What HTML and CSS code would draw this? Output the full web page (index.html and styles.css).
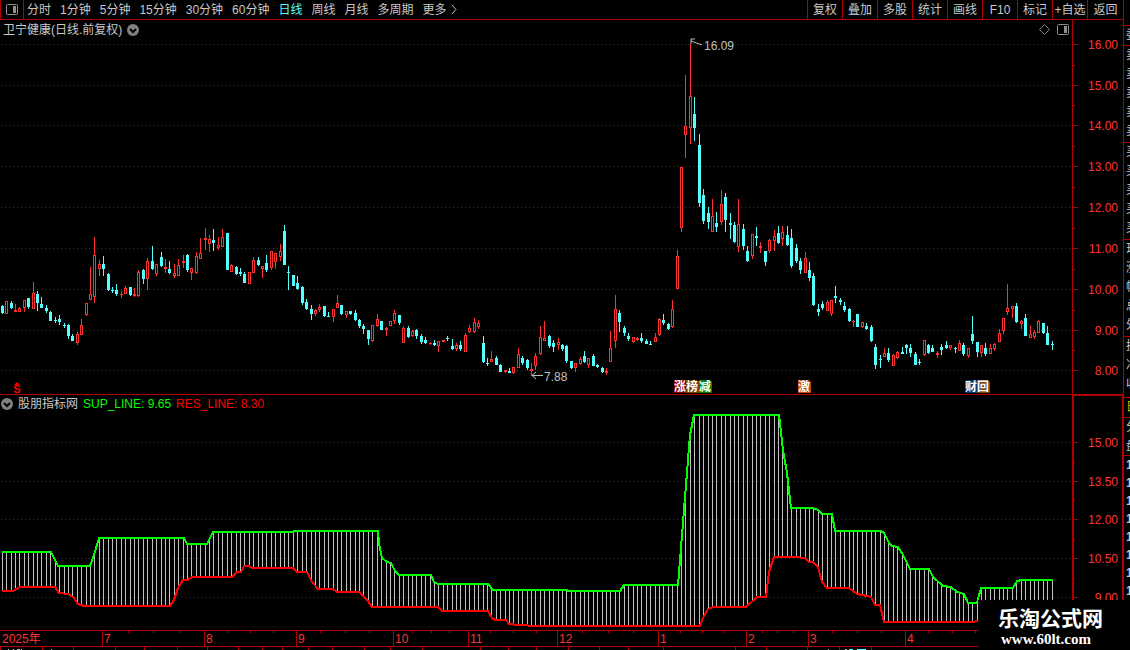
FILE: index.html
```
<!DOCTYPE html>
<html lang="zh-CN">
  <head>
    <meta charset="utf-8">
    <meta name="viewport" content="width=device-width, initial-scale=1.0">
    <title>卫宁健康 日线</title>
    <link rel="stylesheet" href="styles.css">
  </head>

  <body>
    <div class="terminal">
      <div class="workspace">
        <header class="toolbar">
          <button class="layout-btn" aria-label="布局">
            <svg width="12" height="11"><rect x=".5" y=".5" width="11" height="10" rx="1" fill="none" stroke="#909090"/><rect x="7" y="2" width="3" height="7" fill="#909090"/></svg>
          </button>
          <nav class="periods">
            <button>分时</button>
            <button>1分钟</button>
            <button>5分钟</button>
            <button>15分钟</button>
            <button>30分钟</button>
            <button>60分钟</button>
            <button class="active">日线</button>
            <button>周线</button>
            <button>月线</button>
            <button>多周期</button>
            <button class="more">更多<svg width="6" height="9"><path d="M1 0l4 4.500l-4 4.500" fill="none" stroke="#c0c0c0"/></svg></button>
          </nav>
          <nav class="tools">
            <button>复权</button>
            <button>叠加</button>
            <button>多股</button>
            <button>统计</button>
            <button>画线</button>
            <button>F10</button>
            <button>标记</button>
            <button>+自选</button>
            <button>返回</button>
          </nav>
        </header>

        <!-- daily candles -->
        <section class="panel price-panel">
          <div class="plot">
            <svg id="price" class="canvas"></svg>
            <div class="panel-title">
              <span>卫宁健康(日线.前复权)</span>
              <button class="round-btn" aria-label="展开">
                <svg width="12" height="12"><circle cx="6" cy="6" r="6" fill="#808080"/><path d="M3 5l3 3l3-3" fill="none" stroke="#000" stroke-width="2"/></svg>
              </button>
            </div>
            <div class="panel-tools">
              <svg width="11" height="11"><path d="M5.500 .5l5 5l-5 5l-5-5z" fill="none" stroke="#808080"/></svg>
              <svg width="12" height="11"><rect x=".5" y=".5" width="11" height="10" rx="1" fill="none" stroke="#909090"/><rect x="7" y="2" width="3" height="7" fill="#909090"/></svg>
            </div>
          </div>
          <svg id="price-axis" class="axis"></svg>
        </section>

        <!-- support / resistance band -->
        <section class="panel band-panel">
          <div class="plot">
            <svg id="band" class="canvas"></svg>
            <div class="panel-title band-title">
              <button class="round-btn" aria-label="展开">
                <svg width="12" height="12"><circle cx="6" cy="6" r="6" fill="#808080"/><path d="M3 5l3 3l3-3" fill="none" stroke="#000" stroke-width="2"/></svg>
              </button>
              <span>股朋指标网</span>
              <span class="sup">SUP_LINE: 9.65</span>
              <span class="res">RES_LINE: 8.30</span>
            </div>
          </div>
          <svg id="band-axis" class="axis"></svg>
        </section>

        <svg id="dates" class="dates"></svg>
        <svg id="lower" class="lower"></svg>
      </div>

      <aside class="quotes">
        <div class="block gap"></div>
        <div class="block single">委</div>
        <div class="block five">卖<br>卖<br>卖<br>卖<br>卖</div>
        <div class="block five">买<br>买<br>买<br>买<br>买</div>
        <div class="block five">现<br>涨<br>幅<br>总<br>外</div>
        <div class="block three">换<br>净<br>收</div>
        <div class="block single mark">日</div>
        <div class="block two">分<br>盘</div>
        <div class="block ticks">1<br>1<br>1<br>1<br>1<br>1<br>1<br>1</div>
      </aside>
    </div>

    <div class="watermark">
      <strong>乐淘公式网</strong>
      <a href="#">www.60lt.com</a>
    </div>

    <script src="chart.js"></script>
  </body>
</html>
```
FILE: styles.css
```
* {
  box-sizing: border-box;
}

body {
  margin: 0;
  background: #000;
  color: #c8c8c8;
  font-family: "Liberation Sans", "Noto Sans CJK SC", sans-serif;
  font-size: 12px;
  line-height: 18px;
}

button {
  padding: 0;
  border: none;
  background: none;
  color: inherit;
  font: inherit;
  white-space: nowrap;
  cursor: pointer;
}

svg {
  display: block;
}

.terminal {
  display: flex;
  height: 100vh;
  overflow: hidden;
}

.workspace {
  flex: 1;
  min-width: 0;
  display: flex;
  flex-direction: column;
}

/* top bar */
.toolbar {
  display: flex;
  height: 20px;
  border-bottom: 1px solid #b00000;
}

.layout-btn {
  display: flex;
  align-items: center;
  justify-content: center;
  width: 24px;
  border-left: 1px solid #b00000;
  border-right: 1px solid #b00000;
}

.periods {
  display: flex;
  gap: 9px;
  padding-left: 3px;
}

.periods .active {
  color: #54ffff;
}

.more {
  display: flex;
  align-items: center;
  gap: 4px;
}

.tools {
  display: flex;
  margin-left: auto;
}

.tools button {
  width: 35px;
  border-left: 1px solid #b00000;
}

.tools button:last-child {
  width: 36px;
}

/* chart panels */
.panel {
  display: flex;
}

.price-panel {
  flex: 1;
  min-height: 0;
}

.band-panel {
  height: 236px;
  border-top: 1px solid #b00000;
}

.plot {
  position: relative;
  flex: 1;
  min-width: 0;
}

.canvas {
  width: 100%;
  height: 100%;
}

.axis {
  width: 51px;
  height: 100%;
}

.panel-title {
  position: absolute;
  top: 1px;
  left: 3px;
  display: flex;
  align-items: center;
  gap: 5px;
}

.band-title {
  top: 0;
  left: 1px;
}

.round-btn {
  display: block;
}

.sup {
  color: #00ff00;
}

.res {
  color: #ff0000;
}

.panel-tools {
  position: absolute;
  top: 4px;
  right: 3px;
  display: flex;
  gap: 7px;
}

.dates {
  width: 100%;
  height: 17px;
}

.lower {
  width: 100%;
  height: 3px;
}

svg text {
  font-family: "Liberation Sans", "Noto Sans CJK SC", sans-serif;
  font-size: 12px;
}

svg .badge {
  font-weight: bold;
}

svg .dollar {
  font-size: 11px;
  font-weight: bold;
}

/* clipped quote column on the right */
.quotes {
  width: 7px;
  overflow: hidden;
  border-left: 1px solid #b00000;
  line-height: 19px;
}

.block {
  padding-left: 2px;
  overflow: hidden;
  white-space: nowrap;
  border-bottom: 1px solid #b00000;
}

.gap {
  height: 26px;
}

.single {
  height: 20px;
}

.five {
  height: 97px;
}

.three {
  height: 61px;
}

.two {
  height: 38px;
}

.mark {
  color: #c0c000;
}

.ticks {
  line-height: 18px;
  font-weight: bold;
  border-bottom: none;
}

/* site mark over the lower right corner */
.watermark {
  position: absolute;
  right: 0;
  bottom: 0;
  width: 152px;
  height: 50px;
  padding: 8px 0 0 20px;
  background: #000;
  color: #fff;
}

.watermark strong {
  display: block;
  font-size: 21px;
  line-height: 22px;
}

.watermark a {
  display: block;
  padding-left: 3px;
  color: #fff;
  font-family: "Liberation Serif", serif;
  font-size: 15px;
  font-weight: bold;
  line-height: 18px;
  text-decoration: none;
}
```
FILE: chart.js
```
const LINE = "#b00000";
const RED = "#ff3232";
const CYAN = "#54ffff";
const GREY = "#c0c0c0";

const PRICE_TOP = 20;
const BAND_TOP = 395;

// r = up, c = down, then high, body top, body bottom, low
const candles = `
c305,306,313,314 r301,301,314,314 c301,303,308,309 r304,310,312,312 r307,308,312,312 r300,300,308,312
c298,298,307,309 r282,293,309,309 c291,294,303,311 c297,304,308,308 c305,308,311,313 c311,312,321,321
c317,320,321,323 c315,319,322,325 c323,325,326,328 c324,325,336,339 c334,336,341,341 r332,334,343,345
r319,325,335,335 r303,303,315,316 r267,294,300,300 r237,255,297,303 r260,264,269,276 c256,264,269,276
c273,274,290,291 c287,290,291,293 c284,290,294,296 r291,294,295,298 r286,288,294,294 c287,287,295,296
r288,294,296,297 r270,272,296,297 c269,270,279,284 r258,261,279,290 c246,261,269,270 r264,264,274,276
c252,257,266,267 r259,267,269,273 c261,269,273,274 r264,273,276,278 r259,265,276,276 r255,261,263,268
c254,255,270,272 r268,268,273,280 r252,256,273,274 r238,253,259,259 r228,238,240,250 r235,239,244,252
c229,240,243,251 r237,245,248,250 r229,237,247,247 c233,233,270,270 r264,265,272,272 c266,267,274,275
c268,272,274,276 c272,274,283,283 r272,272,284,284 r257,260,273,273 c257,260,265,266 r266,266,269,278
c255,263,270,272 r251,251,268,270 r253,253,262,269 r244,251,257,261 c225,231,265,265 c266,272,273,290
c275,275,286,286 c276,283,289,290 c286,287,303,305 c299,302,309,310 c305,309,314,320 r309,310,314,316
r304,307,310,312 c306,306,316,317 c312,316,317,317 r309,309,317,322 r295,303,308,308 c305,305,314,315
r311,311,315,318 c311,311,314,315 c310,313,320,321 c319,320,326,328 c324,326,329,334 c330,330,339,345
r325,325,341,342 r314,319,326,327 c321,321,330,330 r327,328,330,336 r321,321,326,326 r310,313,321,324
c315,315,323,325 r326,328,343,343 c326,328,337,338 r330,331,336,337 c329,330,336,339 c334,336,342,344
c337,340,343,344 r342,343,344,345 c340,343,345,346 r341,341,346,352 r340,340,342,342 c336,338,339,341
c339,346,349,350 r343,345,349,351 c341,345,349,351 r333,335,352,352 r325,328,332,333 r318,322,332,333
r320,323,327,329 c336,343,362,363 c358,363,364,366 r351,359,362,362 c356,358,365,365 c364,365,372,372
r370,370,372,373 c368,371,373,373 r367,367,373,374 r348,354,368,368 c356,358,363,365 c359,360,368,370
r363,369,371,376 r353,356,366,370 r326,337,354,355 r321,338,341,341 c335,336,346,348 c340,343,347,352
r338,342,345,350 c344,345,349,351 c345,346,361,363 c361,361,368,369 r363,363,368,372 r357,359,364,365
c351,356,362,363 r358,358,365,368 c354,356,366,366 c364,365,367,368 c367,368,372,373 r368,371,373,375
r331,348,362,362 r295,309,341,348 c310,313,322,332 c326,328,333,336 c333,336,339,341 r337,337,342,343
r337,338,340,341 c333,338,341,343 c339,341,344,344 c341,344,345,345 r333,337,342,342 r318,319,335,336
c314,320,323,325 c323,324,329,330 r300,309,327,328 r250,256,289,289 r167,167,228,232 r75,126,135,158
r44,96,128,144 c97,114,128,141 c134,145,203,207 c189,195,221,224 c207,213,222,229 r199,216,232,232
c212,223,227,232 r190,204,222,225 c193,197,220,232 c213,223,225,239 c222,225,242,243 r199,224,247,252
c224,229,246,250 c246,251,261,262 r234,234,256,259 c227,236,238,246 r242,246,248,253 c251,251,262,266
r239,240,251,253 r230,236,241,251 c226,233,243,244 r226,232,239,246 c226,235,245,246 c229,238,266,268
c244,248,261,263 c258,261,270,274 r252,258,273,273 c262,270,278,281 c273,276,305,306 c304,309,312,316
c301,304,308,310 r300,302,311,311 r300,300,314,316 c286,296,298,303 c298,300,302,305 c302,306,310,312
c308,309,321,322 r320,321,322,327 c314,314,327,327 r322,322,327,328 c323,326,329,330 c325,327,341,342
c344,347,365,369 c355,359,360,368 r348,353,357,357 c348,353,360,362 r354,355,366,366 r351,352,358,359
c347,352,354,354 c344,345,348,354 c344,348,353,357 c352,354,365,365 c359,362,363,365 r340,340,355,356
c344,345,353,354 c345,348,352,352 r351,353,355,358 c344,347,350,355 c341,345,348,349 r345,345,348,350
c347,348,349,353 r340,343,351,351 c343,345,354,356 r348,348,356,358 c316,334,341,344 c342,342,352,357
r345,345,353,357 c343,348,354,356 r344,348,354,354 r343,344,349,351 r329,333,342,342 r318,318,331,334
r284,308,312,315 r306,306,309,318 c303,306,322,323 r320,321,324,329 c314,318,336,336 r326,334,338,338
r330,332,337,339 r320,321,333,333 c323,323,333,334 c326,333,345,345 c341,344,345,350`.trim().split(/\s+/);

const sup = [[2,552],[51,552],[54,558],[58,566],[90,566],[94,555],[99,538],[184,538],[187,544],[207,544],[213,532],[293,532],[294,531],[378,531],[379,543],[382,558],[387,562],[391,563],[395,571],[399,575],[431,575],[434,582],[438,584],[488,584],[493,590],[567,590],[568,591],[620,591],[624,585],[678,585],[690,435],[694,415],[779,415],[783,450],[787,473],[791,508],[813,508],[818,510],[822,514],[832,514],[835,531],[881,531],[884,533],[889,543],[892,546],[898,547],[903,555],[910,569],[929,569],[933,577],[943,586],[951,587],[957,592],[964,594],[968,603],[977,603],[981,588],[1013,588],[1017,581],[1022,580],[1053,580]];
const res = [[2,591],[13,591],[20,587],[55,587],[59,593],[68,594],[73,597],[78,604],[84,606],[170,606],[174,600],[178,588],[183,580],[188,580],[192,577],[232,577],[237,572],[241,572],[244,566],[249,566],[252,568],[293,568],[297,572],[307,572],[312,582],[318,589],[333,589],[337,592],[359,592],[368,601],[372,607],[438,607],[442,611],[488,611],[492,618],[495,620],[506,620],[509,624],[518,625],[537,626],[700,626],[703,618],[708,609],[713,607],[746,607],[757,597],[766,597],[769,572],[774,557],[795,557],[805,558],[809,562],[813,562],[818,567],[822,582],[827,588],[849,588],[857,594],[867,596],[871,597],[875,605],[880,605],[884,622],[972,622],[978,621],[1053,621]];

function rect(x, y, w, h, fill) {
  return `<rect x="${x}" y="${y}" width="${w}" height="${h}" fill="${fill}"/>`;
}

function text(x, y, str, fill, anchor = "start", cls = "label") {
  return `<text class="${cls}" x="${x}" y="${y}" fill="${fill}" text-anchor="${anchor}">${str}</text>`;
}

function candleX(i) {
  return Math.round(1.75 + 4.411 * i);
}

// dotted horizontal lines
function grid(id, rows, top) {
  let out = `<defs><pattern id="${id}" width="4" height="1" patternUnits="userSpaceOnUse">${rect(1, 0, 1, 1, LINE)}</pattern></defs>`;
  rows.forEach(y => out += rect(0, y - top, "100%", 1, `url(#${id})`));
  return out;
}

function valueAt(line, x) {
  for (let i = 1; i < line.length; i++) {
    const [x0, y0] = line[i - 1];
    const [x1, y1] = line[i];
    if (x <= x1) return Math.round(y0 + (y1 - y0) * (x - x0) / (x1 - x0));
  }
  return line[line.length - 1][1];
}

function drawPrice() {
  let out = grid("dots-price", [44, 85, 125, 166, 207, 248, 289, 330, 370], PRICE_TOP);
  candles.forEach((c, i) => {
    const x = candleX(i);
    const [high, top, bottom, low] = c.slice(1).split(",").map(v => v - PRICE_TOP);
    const color = c[0] === "r" ? RED : CYAN;
    out += rect(x, high, 1, Math.max(low - high, 1), color);
    out += rect(x - 1, top, 3, bottom - top, color);
    if (c[0] === "r" && bottom - top > 2) out += rect(x, top + 1, 1, bottom - top - 2, "#000");
  });

  // high and low marks
  out += `<path d="M702 25l-11-4M695 19h-4v5" fill="none" stroke="${GREY}"/>` + text(704, 30, "16.09", GREY);
  out += `<path d="M543 355.500h-11M536 352l-4 3.500l4 3.500" fill="none" stroke="${GREY}"/>` + text(544, 361, "7.88", GREY);

  // event badges
  [[674, "涨", "#800000"], [686, "榜", "#804000"], [699, "减", "#008000"], [798, "激", "#c04808"], [965, "财", "#003870"], [977, "回", "#804000"]].forEach(([x, s, bg]) => {
    out += `<path d="M${x} 360h11l2 2v11h-13z" fill="${bg}"/>` + text(x, 371, s, "#fff", "start", "badge");
  });

  out += `<path d="M17 362l3 3h-6z" fill="#ff0000"/>` + text(17, 373, "S", "#ff0000", "middle", "dollar");
  document.getElementById("price").innerHTML = out;
}

function drawBand() {
  let out = grid("dots-band", [442, 481, 519, 558, 597], BAND_TOP);
  candles.forEach((c, i) => {
    const x = candleX(i);
    const y = valueAt(sup, x);
    out += rect(x, y - BAND_TOP, 1, valueAt(res, x) - y, GREY);
  });
  [[sup, "#00ff00"], [res, "#ff0000"]].forEach(([line, color]) => {
    const points = line.map(([x, y]) => `${x},${y - BAND_TOP}`).join(" ");
    out += `<polyline points="${points}" fill="none" stroke="${color}" stroke-width="2" shape-rendering="crispEdges"/>`;
  });
  document.getElementById("band").innerHTML = out;
}

function drawAxis(id, labels, minor, top, lineWidth) {
  let out = rect(0, 0, lineWidth, "100%", LINE);
  labels.forEach(([y, s]) => {
    out += rect(0, y - top, 6, 1, LINE) + text(46, y - top + 5, s, RED, "end");
  });
  minor.forEach(y => out += rect(0, y - top, 3, 1, LINE));
  if (lineWidth === 2) out += rect(0, 0, "100%", 1, LINE) + rect(50, 0, 1, "100%", LINE);
  document.getElementById(id).innerHTML = out;
}

function drawDates() {
  let out = rect(0, 0, "100%", 1, LINE) + rect(0, 16, "100%", 1, LINE) + text(2, 13, "2025年", RED);
  [[102, 7], [204, 8], [296, 9], [393, 10], [468, 11], [557, 12], [658, 1], [746, 2], [808, 3], [905, 4]].forEach(([x, s]) => {
    out += rect(x, 0, 1, 16, LINE) + text(x + 2, 13, s, RED);
  });
  [128, 153, 179, 227, 250, 273, 320, 345, 369, 412, 431, 449, 490, 513, 536, 582, 608, 633, 680, 702, 724, 762, 777, 793, 832, 857, 881, 928, 952, 975].forEach(x => out += rect(x, 1, 1, 2, LINE));
  document.getElementById("dates").innerHTML = out;
}

// top edge of the next pane
function drawLower() {
  let out = "";
  [0, 42, 73, 115, 144, 177, 207, 238, 262, 282, 308, 332, 364, 390, 422, 480, 508, 536, 568, 599, 628, 663, 735, 766, 807, 839, 871].forEach(x => out += rect(x, 0, 1, 3, LINE));
  [[8, 1], [13, 1], [17, 3], [21, 1], [51, 1], [828, 1], [845, 2]].forEach(([x, w]) => out += rect(x, 2, w, 1, GREY));
  [[849, 4], [857, 9]].forEach(([x, w]) => out += rect(x, 2, w, 1, CYAN));
  document.getElementById("lower").innerHTML = out;
}

drawPrice();
drawBand();
drawAxis("price-axis", [[44, "16.00"], [85, "15.00"], [125, "14.00"], [166, "13.00"], [207, "12.00"], [248, "11.00"], [289, "10.00"], [330, "9.00"], [370, "8.00"]], [65, 105, 146, 187, 228, 269, 310, 350], PRICE_TOP, 1);
drawAxis("band-axis", [[442, "15.00"], [481, "13.50"], [519, "12.00"], [558, "10.50"], [597, "9.00"]], [462, 500, 539, 578], BAND_TOP, 2);
drawDates();
drawLower();
```
